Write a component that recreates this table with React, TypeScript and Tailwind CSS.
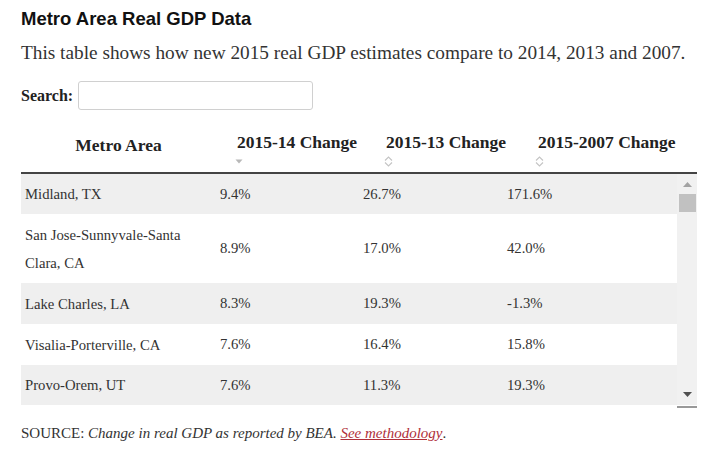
const rows = [
  { name: "Midland, TX", a: "9.4%", b: "26.7%", c: "171.6%", h: "h-[40px]" },
  { name: "San Jose-Sunnyvale-Santa Clara, CA", a: "8.9%", b: "17.0%", c: "42.0%", h: "h-[69px]" },
  { name: "Lake Charles, LA", a: "8.3%", b: "19.3%", c: "-1.3%", h: "h-[41px]" },
  { name: "Visalia-Porterville, CA", a: "7.6%", b: "16.4%", c: "15.8%", h: "h-[41px]" },
  { name: "Provo-Orem, UT", a: "7.6%", b: "11.3%", c: "19.3%", h: "h-[40px]" },
]

function SortDesc() {
  return (
    <svg width="8" height="6" viewBox="0 0 8 6" className="block">
      <path d="M0.5 1.5h7L4 5.5z" fill="#b8b8b8" />
    </svg>
  )
}

function SortBoth() {
  return (
    <svg width="9" height="11" viewBox="0 0 9 11" className="block">
      <path d="M1 4.5L4.5 1 8 4.5M1 6.5L4.5 10 8 6.5" fill="none" stroke="#c4c4c4" strokeWidth="1.1" />
    </svg>
  )
}

function Scrollbar() {
  return (
    <div className="w-[20px] bg-[#f1f1f1] flex flex-col items-center">
      <div className="h-[20px] flex items-center justify-center">
        <svg width="9" height="5" viewBox="0 0 9 5">
          <path d="M0 5L4.5 0 9 5z" fill="#a3a3a3" />
        </svg>
      </div>
      <div className="w-[17px] h-[18px] bg-[#c1c1c1]" />
      <div className="flex-1" />
      <div className="h-[22px] flex items-center justify-center">
        <svg width="9" height="5" viewBox="0 0 9 5">
          <path d="M0 0h9L4.5 5z" fill="#505050" />
        </svg>
      </div>
    </div>
  )
}

export default function App() {
  return (
    <div className="w-[723px] h-[461px] bg-white pl-[21px] text-[#333]" style={{ fontFamily: '"Liberation Serif", serif' }}>
      <div className="pt-[9px] text-[18.5px] leading-[20px] font-bold text-[#111]" style={{ fontFamily: '"Liberation Sans", Arial, sans-serif' }}>
        Metro Area Real GDP Data
      </div>
      <div className="mt-[11px] text-[19.3px] leading-[26px] text-[#333]">
        This table shows how new 2015 real GDP estimates compare to 2014, 2013 and 2007.
      </div>
      <div className="mt-[15px] flex items-center h-[29px]">
        <span className="font-bold text-[16px] text-[#222] mr-[5px]">Search:</span>
        <div className="w-[235px] h-[29px] border border-[#d0d0d0] rounded-[3px]" />
      </div>

      <div className="w-[676px]">
        <div className="flex h-[64px] border-b-2 border-[#444] font-bold text-[17.5px] text-[#222]">
          <div className="w-[195px] flex items-center justify-center pt-[8px]">Metro Area</div>
          <div className="w-[143px] pl-[21px] pt-[22px]">
            <div className="leading-[20px] whitespace-nowrap">2015-14 Change</div>
            <div className="mt-[6px] -ml-[2px]"><SortDesc /></div>
          </div>
          <div className="w-[144px] pl-[27px] pt-[22px]">
            <div className="leading-[20px] whitespace-nowrap">2015-13 Change</div>
            <div className="mt-[4px] -ml-[2px]"><SortBoth /></div>
          </div>
          <div className="flex-1 pl-[35px] pt-[22px]">
            <div className="leading-[20px] whitespace-nowrap">2015-2007 Change</div>
            <div className="mt-[4px] -ml-[3px]"><SortBoth /></div>
          </div>
        </div>

        <div className="flex">
          <div className="flex-1 text-[14.7px] text-[#333]">
            {rows.map((r, i) => (
              <div key={r.name} className={`flex items-center ${r.h} ${i % 2 === 0 ? "bg-[#efefef]" : "bg-white"}`}>
                <div className="w-[195px] pl-[4px] pr-[16px] leading-[28px]">{r.name}</div>
                <div className="w-[143px] pl-[4px]">{r.a}</div>
                <div className="w-[144px] pl-[4px]">{r.b}</div>
                <div className="flex-1 pl-[4px]">{r.c}</div>
              </div>
            ))}
          </div>
          <Scrollbar />
        </div>
        <div className="flex justify-end">
          <div className="w-[20px] h-[3px] border-b-2 border-[#999]" />
        </div>
      </div>

      <div className="mt-[14px] text-[15px] text-[#333]">
        SOURCE: <span className="italic">Change in real GDP as reported by BEA. </span>
        <span className="italic text-[#b0303a] underline">See methodology</span>.
      </div>
    </div>
  )
}
